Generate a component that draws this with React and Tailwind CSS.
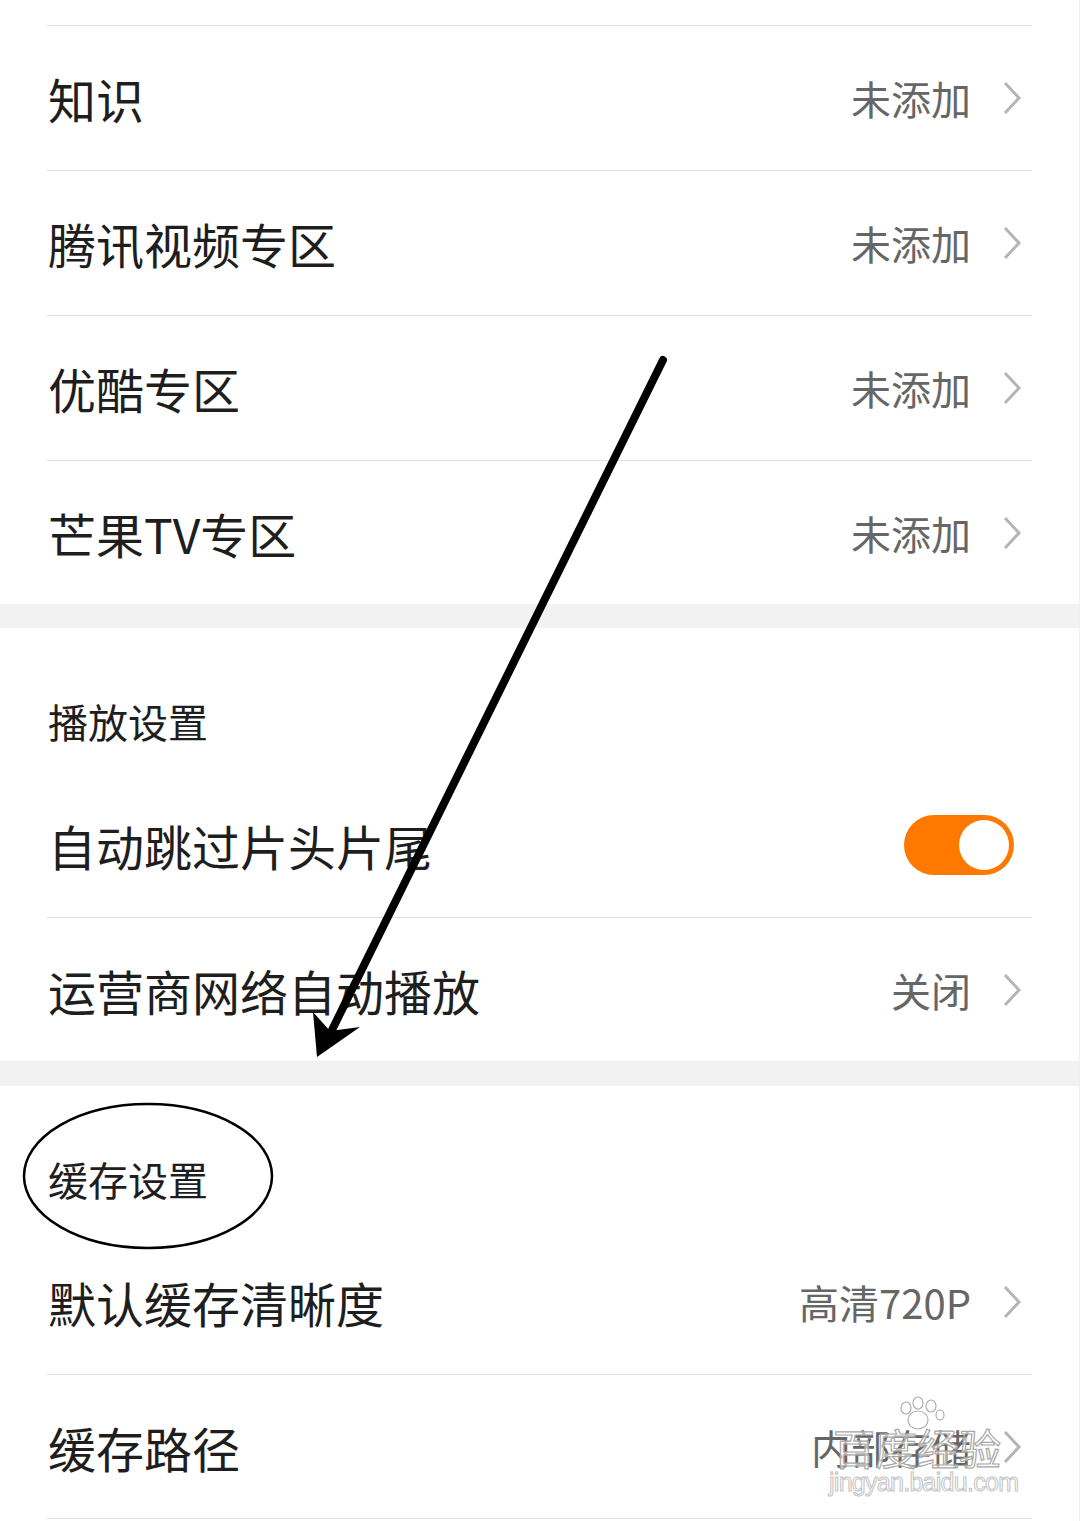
import React from "react";

const font = { fontFamily: '"Noto Sans CJK SC", "Noto Sans", sans-serif' };

const Chevron = () => (
  <svg width="20" height="34" viewBox="0 0 20 34" className="ml-[31px] shrink-0">
    <path d="M3 2 L17 17 L3 32" fill="none" stroke="#b5b5b5" strokeWidth="3" />
  </svg>
);

const Row = ({ label, value, border = true, h = "h-[145px]", children }) => (
  <div
    className={`mx-[47px] ${h} flex items-center ${
      border ? "border-b border-[#dedede]" : ""
    }`}
  >
    <span className="flex-1 pl-[1px] text-[48px] leading-none text-[#1e1e1e]">
      {label}
    </span>
    {children ? (
      children
    ) : (
      <div className="flex items-center mr-[10px]">
        <span className="text-[40px] leading-none text-[#666666]">{value}</span>
        <Chevron />
      </div>
    )}
  </div>
);

const Header = ({ title }) => (
  <div className="h-[144px] flex items-end pb-[31px] px-[48px]">
    <span className="text-[40px] leading-[40px] text-[#1e1e1e]">{title}</span>
  </div>
);

const Toggle = () => (
  <div className="mr-[18px] w-[110px] h-[60px] rounded-full bg-[#ff7800] p-[5px] flex justify-end">
    <div className="w-[50px] h-[50px] rounded-full bg-white" />
  </div>
);

// hand-drawn annotation on top of the screenshot
const Annotations = () => (
  <svg
    className="absolute inset-0 pointer-events-none"
    width="1080"
    height="1521"
    viewBox="0 0 1080 1521"
  >
    <line
      x1="663"
      y1="360"
      x2="332"
      y2="1030"
      stroke="#000"
      strokeWidth="8"
      strokeLinecap="round"
    />
    <polygon points="317,1057 313,1012 330,1031 360,1027" fill="#000" />
    <ellipse
      cx="148"
      cy="1176"
      rx="124"
      ry="72"
      fill="none"
      stroke="#000"
      strokeWidth="2.5"
    />
    {/* baidu jingyan watermark */}
    <g fill="#fff" fillOpacity="0.55" stroke="#b0b0b0" strokeWidth="1.2">
      <ellipse cx="918" cy="1420" rx="10" ry="9" />
      <ellipse cx="906" cy="1408" rx="5" ry="6" />
      <ellipse cx="918" cy="1403" rx="5" ry="6" />
      <ellipse cx="931" cy="1406" rx="5" ry="6" />
      <ellipse cx="940" cy="1415" rx="4" ry="5" />
    </g>
    <text
      x="833"
      y="1465"
      fontSize="42"
      fill="#fff"
      fillOpacity="0.6"
      stroke="#a8a8a8"
      strokeWidth="1.2"
      style={font}
    >
      百度经验
    </text>
    <text
      x="829"
      y="1491"
      fontSize="25"
      textLength="190"
      fill="#fff"
      stroke="#c4c4c4"
      strokeWidth="1"
      style={{ fontFamily: '"Liberation Sans", sans-serif' }}
    >
      jingyan.baidu.com
    </text>
  </svg>
);

export default function App() {
  return (
    <div
      className="relative w-[1080px] h-[1521px] bg-white overflow-hidden border-r border-[#f0f0f0]"
      style={font}
    >
      <div className="mx-[47px] h-[26px] border-b border-[#dedede]" />
      <Row label="知识" value="未添加" />
      <Row label="腾讯视频专区" value="未添加" />
      <Row label="优酷专区" value="未添加" />
      <Row label="芒果TV专区" value="未添加" border={false} h="h-[143px]" />

      <div className="h-[24px] bg-[#f2f2f2]" />

      <Header title="播放设置" />
      <Row label="自动跳过片头片尾" h="h-[146px]">
        <Toggle />
      </Row>
      <Row label="运营商网络自动播放" value="关闭" border={false} h="h-[143px]" />

      <div className="h-[25px] bg-[#f2f2f2]" />

      <Header title="缓存设置" />
      <Row label="默认缓存清晰度" value="高清720P" />
      <Row label="缓存路径" value="内部存储" h="h-[144px]" />

      <Annotations />
    </div>
  );
}
